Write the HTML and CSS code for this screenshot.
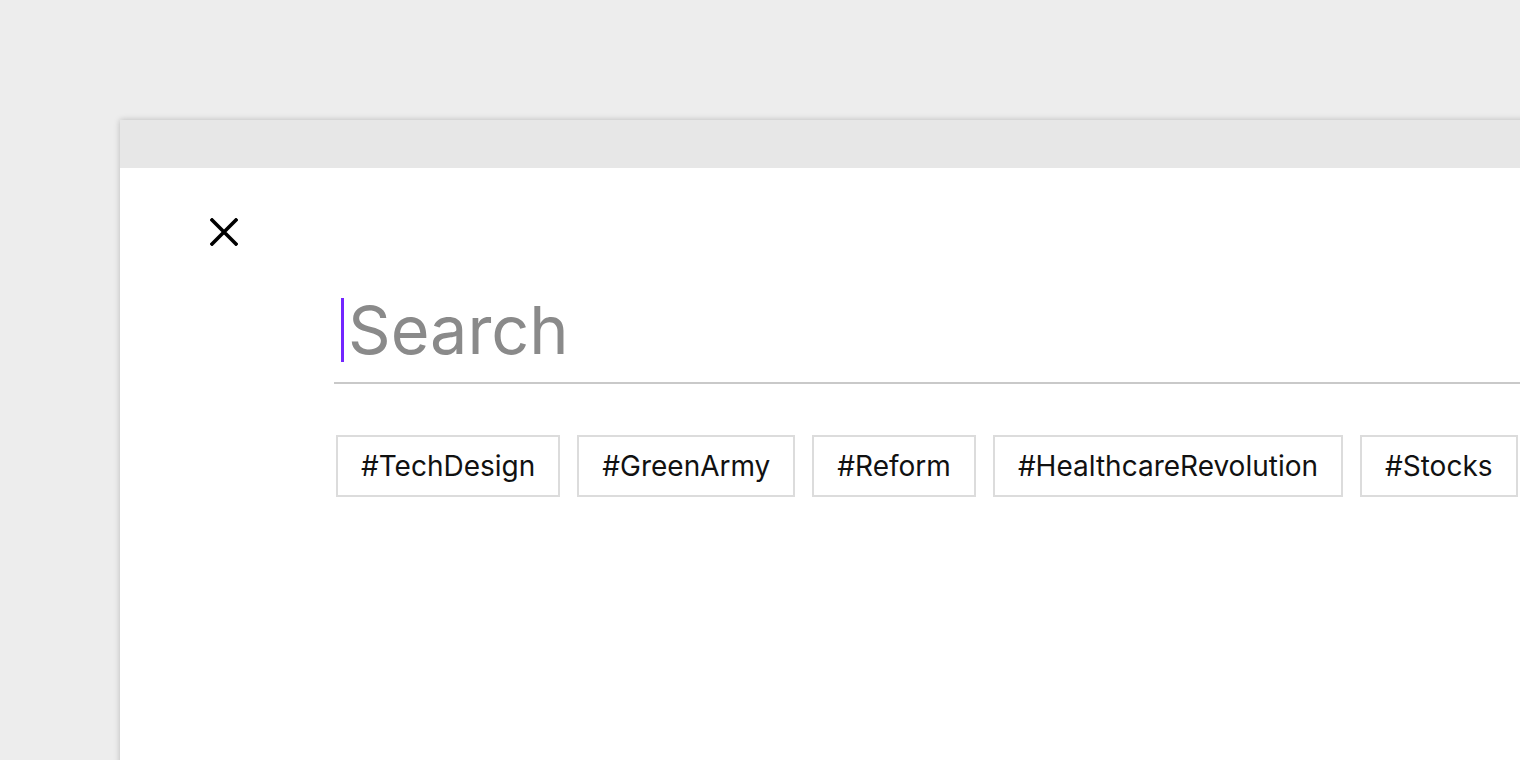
FILE: index.html
```html
<!DOCTYPE html>
<html>
<head>
<meta charset="utf-8">
<link rel="stylesheet" href="styles.css">
</head>
<body>
<div class="panel">
  <div class="topbar"></div>
  <div class="content">
    <button class="close" aria-label="Close">
      <svg width="28" height="28" viewBox="0 0 28 28"><path d="M2 2 L26 26 M26 2 L2 26" stroke="#000" stroke-width="3.6" stroke-linecap="square" fill="none"/></svg>
    </button>
    <div class="search">
      <span class="caret"></span><span class="placeholder">Search</span>
    </div>
    <div class="tags">
      <span class="tag">#TechDesign</span>
      <span class="tag">#GreenArmy</span>
      <span class="tag">#Reform</span>
      <span class="tag">#HealthcareRevolution</span>
      <span class="tag">#Stocks</span>
    </div>
  </div>
</div>
</body>
</html>
```
FILE: styles.css
```css
html, body {
  margin: 0;
  padding: 0;
  height: 100%;
  overflow: hidden;
}
body {
  background: #ededed;
  font-family: Inter, "Liberation Sans", sans-serif;
}
.panel {
  margin: 120px 0 0 120px;
  width: 1500px;
  height: 800px;
  background: #fff;
  box-shadow: 0 0 6px rgba(0,0,0,0.22);
  display: flex;
  flex-direction: column;
}
.topbar {
  height: 48px;
  background: #e7e7e7;
  flex: none;
}
.content {
  padding: 50px 0 0 90px;
  display: flex;
  flex-direction: column;
}
.close {
  border: 0;
  background: none;
  padding: 0;
  width: 28px;
  height: 28px;
  display: block;
}
.close svg { display: block; }
.search {
  margin: 52px 0 0 124px;
  height: 64px;
  padding-bottom: 20px;
  border-bottom: 2px solid #c9c9c9;
  display: flex;
  align-items: center;
}
.caret {
  width: 3px;
  height: 64px;
  background: #7326ff;
  margin: 0 4px 0 7px;
  flex: none;
}
.placeholder {
  font-size: 66.5px;
  line-height: 64px;
  color: #8a8a8a;
}
.tags {
  margin: 51px 0 0 126px;
  display: flex;
  gap: 17px;
}
.tag {
  flex: none;
  border: 2px solid #dcdcdc;
  height: 58px;
  padding: 0 23px;
  display: flex;
  align-items: center;
  font-size: 28px;
  color: #111;
}
```
